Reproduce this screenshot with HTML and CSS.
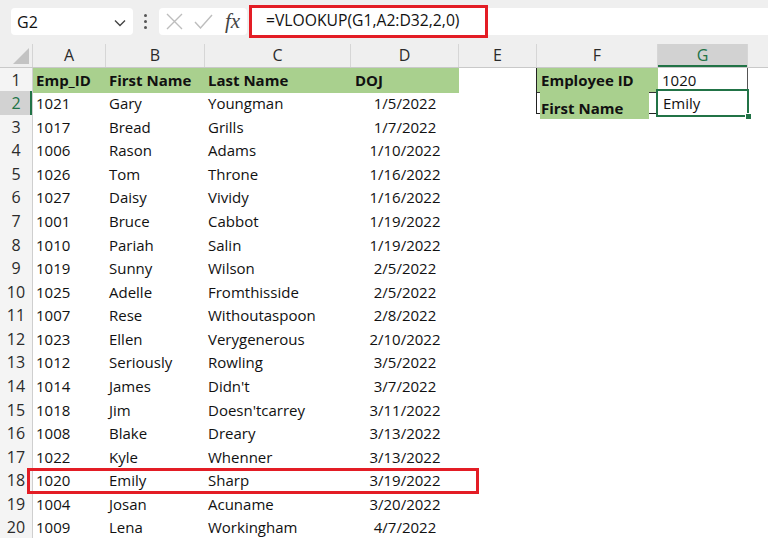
FILE: index.html
```html
<!DOCTYPE html>
<html>
<head>
<meta charset="utf-8">
<link rel="stylesheet" href="styles.css">
</head>
<body>
<div class="toolbar">
  <div class="namebox"><span>G2</span>
    <svg class="chev" width="12" height="8" viewBox="0 0 12 8"><path d="M1 1.5 L6 6.5 L11 1.5" fill="none" stroke="#444" stroke-width="1.4"/></svg>
  </div>
  <div class="dots"><i></i><i></i><i></i></div>
  <div class="fxbox">
    <svg width="17" height="17" viewBox="0 0 17 17"><path d="M1 1 L16 16 M16 1 L1 16" stroke="#bdbdbd" stroke-width="1.4" fill="none"/></svg>
    <svg width="19" height="15" viewBox="0 0 19 15"><path d="M1 8 L6.5 14 L18 1" stroke="#bdbdbd" stroke-width="1.4" fill="none"/></svg>
    <span class="fx">fx</span>
  </div>
  <div class="formula"><div class="hl">=VLOOKUP(G1,A2:D32,2,0)</div></div>
</div>
<div class="sheet">
  <div class="row colhead">
    <div class="corner"><svg width="16" height="16" viewBox="0 0 16 16"><path d="M16 0 L16 16 L0 16 Z" fill="#c3c3c3"/></svg></div>
    <div class="ch">A</div><div class="ch">B</div><div class="ch">C</div><div class="ch">D</div><div class="ch">E</div><div class="ch">F</div><div class="ch sel">G</div><div class="ch last"></div>
  </div>
  <div class="row">
    <div class="rh">1</div>
    <div class="c g b">Emp_ID</div><div class="c g b">First Name</div><div class="c g b">Last Name</div><div class="c g b doj">DOJ</div>
    <div class="c"></div><div class="c g b f1">Employee ID</div><div class="c g1">1020</div><div class="c"></div>
  </div>
  <div class="row">
    <div class="rh sel">2</div>
    <div class="c">1021</div><div class="c">Gary</div><div class="c">Youngman</div><div class="c d">1/5/2022</div>
    <div class="c"></div><div class="c f2"><div class="f2fill">First Name</div></div><div class="c g2">Emily<span class="selbox"><i class="handle"></i></span></div><div class="c"></div>
  </div>
  <div class="row"><div class="rh">3</div><div class="c">1017</div><div class="c">Bread</div><div class="c">Grills</div><div class="c d">1/7/2022</div><div class="c"></div><div class="c"></div><div class="c"></div><div class="c"></div></div>
  <div class="row"><div class="rh">4</div><div class="c">1006</div><div class="c">Rason</div><div class="c">Adams</div><div class="c d">1/10/2022</div><div class="c"></div><div class="c"></div><div class="c"></div><div class="c"></div></div>
  <div class="row"><div class="rh">5</div><div class="c">1026</div><div class="c">Tom</div><div class="c">Throne</div><div class="c d">1/16/2022</div><div class="c"></div><div class="c"></div><div class="c"></div><div class="c"></div></div>
  <div class="row"><div class="rh">6</div><div class="c">1027</div><div class="c">Daisy</div><div class="c">Vividy</div><div class="c d">1/16/2022</div><div class="c"></div><div class="c"></div><div class="c"></div><div class="c"></div></div>
  <div class="row"><div class="rh">7</div><div class="c">1001</div><div class="c">Bruce</div><div class="c">Cabbot</div><div class="c d">1/19/2022</div><div class="c"></div><div class="c"></div><div class="c"></div><div class="c"></div></div>
  <div class="row"><div class="rh">8</div><div class="c">1010</div><div class="c">Pariah</div><div class="c">Salin</div><div class="c d">1/19/2022</div><div class="c"></div><div class="c"></div><div class="c"></div><div class="c"></div></div>
  <div class="row"><div class="rh">9</div><div class="c">1019</div><div class="c">Sunny</div><div class="c">Wilson</div><div class="c d">2/5/2022</div><div class="c"></div><div class="c"></div><div class="c"></div><div class="c"></div></div>
  <div class="row"><div class="rh">10</div><div class="c">1025</div><div class="c">Adelle</div><div class="c">Fromthisside</div><div class="c d">2/5/2022</div><div class="c"></div><div class="c"></div><div class="c"></div><div class="c"></div></div>
  <div class="row"><div class="rh">11</div><div class="c">1007</div><div class="c">Rese</div><div class="c">Withoutaspoon</div><div class="c d">2/8/2022</div><div class="c"></div><div class="c"></div><div class="c"></div><div class="c"></div></div>
  <div class="row"><div class="rh">12</div><div class="c">1023</div><div class="c">Ellen</div><div class="c">Verygenerous</div><div class="c d">2/10/2022</div><div class="c"></div><div class="c"></div><div class="c"></div><div class="c"></div></div>
  <div class="row"><div class="rh">13</div><div class="c">1012</div><div class="c">Seriously</div><div class="c">Rowling</div><div class="c d">3/5/2022</div><div class="c"></div><div class="c"></div><div class="c"></div><div class="c"></div></div>
  <div class="row"><div class="rh">14</div><div class="c">1014</div><div class="c">James</div><div class="c">Didn't</div><div class="c d">3/7/2022</div><div class="c"></div><div class="c"></div><div class="c"></div><div class="c"></div></div>
  <div class="row"><div class="rh">15</div><div class="c">1018</div><div class="c">Jim</div><div class="c">Doesn'tcarrey</div><div class="c d">3/11/2022</div><div class="c"></div><div class="c"></div><div class="c"></div><div class="c"></div></div>
  <div class="row"><div class="rh">16</div><div class="c">1008</div><div class="c">Blake</div><div class="c">Dreary</div><div class="c d">3/13/2022</div><div class="c"></div><div class="c"></div><div class="c"></div><div class="c"></div></div>
  <div class="row"><div class="rh">17</div><div class="c">1022</div><div class="c">Kyle</div><div class="c">Whenner</div><div class="c d">3/13/2022</div><div class="c"></div><div class="c"></div><div class="c"></div><div class="c"></div></div>
  <div class="row mark"><div class="rh">18</div><div class="c">1020</div><div class="c">Emily</div><div class="c">Sharp</div><div class="c d">3/19/2022</div><div class="c"></div><div class="c"></div><div class="c"></div><div class="c"></div></div>
  <div class="row"><div class="rh">19</div><div class="c">1004</div><div class="c">Josan</div><div class="c">Acuname</div><div class="c d">3/20/2022</div><div class="c"></div><div class="c"></div><div class="c"></div><div class="c"></div></div>
  <div class="row"><div class="rh">20</div><div class="c">1009</div><div class="c">Lena</div><div class="c">Workingham</div><div class="c d">4/7/2022</div><div class="c"></div><div class="c"></div><div class="c"></div><div class="c"></div></div>
</div>
</body>
</html>
```
FILE: styles.css
```css
html, body {
  margin: 0;
  padding: 0;
  background: #fff;
  overflow: hidden;
  width: 768px;
  height: 538px;
  font-family: "Open Sans", "Noto Sans", sans-serif;
  color: #111;
}

.toolbar {
  height: 44px;
  box-sizing: border-box;
  background: #efefef;
  display: flex;
  align-items: flex-start;
  padding-top: 8px;
  padding-left: 11px;
}

.namebox {
  width: 122px;
  height: 27px;
  background: #fff;
  border-radius: 4px;
  display: flex;
  align-items: center;
  justify-content: space-between;
  box-sizing: border-box;
  padding: 0 7px 0 6px;
  font-size: 16px;
}
.chev { margin-top: 2px; }

.dots {
  width: 4px;
  margin-left: 11px;
  height: 27px;
  display: flex;
  flex-direction: column;
  justify-content: center;
  gap: 3px;
}
.dots i {
  display: block;
  width: 3px;
  height: 3px;
  border-radius: 50%;
  background: #555;
}

.fxbox {
  margin-left: 11px;
  width: 88px;
  height: 27px;
  background: #fff;
  border-radius: 4px;
  display: flex;
  align-items: center;
  box-sizing: border-box;
  padding-left: 7px;
  gap: 11px;
}
.fx {
  font-family: "Liberation Serif", "DejaVu Serif", serif;
  font-style: italic;
  font-size: 21px;
  color: #444;
  margin-left: 1px;
  line-height: 1;
}

.formula {
  flex: 1;
  margin-left: 2px;
  height: 27px;
  background: #fff;
}
.hl {
  width: 239px;
  height: 33px;
  margin-top: -3px;
  box-sizing: border-box;
  border: 3.5px solid #e31d25;
  padding-left: 14px;
  font-size: 15.7px;
  line-height: 25px;
}

.row {
  display: grid;
  grid-template-columns: 33px 73px 99px 146px 108px 78px 121px 90px 1fr;
  height: 23.58px;
}

.colhead {
  height: 23.5px;
  background: #efefef;
  border-bottom: 1px solid #c9c9c9;
  box-sizing: border-box;
}
.corner {
  display: flex;
  align-items: flex-end;
  justify-content: flex-end;
  padding: 0 3px 3px 0;
  box-sizing: border-box;
  border-right: 1px solid #d4d4d4;
}
.ch {
  text-align: center;
  font-size: 16px;
  line-height: 23px;
  color: #2b2b2b;
  border-right: 1px solid #d6d6d6;
}
.ch.last { border-right: 0; }
.ch.sel {
  background: #d2d2d2;
  color: #217346;
  box-shadow: inset 0 -2px 0 #217346;
}

.rh {
  background: #f4f4f4;
  border-right: 1px solid #cfcfcf;
  text-align: center;
  font-size: 16px;
  line-height: 24px;
  color: #2b2b2b;
}
.rh.sel {
  background: #d2d2d2;
  color: #217346;
  box-shadow: inset -2px 0 0 #217346;
}

.c {
  font-size: 15px;
  line-height: 24px;
  padding-left: 3px;
  white-space: nowrap;
  position: relative;
}
.c.d {
  text-align: center;
  padding-left: 0;
}
.c.doj { padding-left: 4px; }
.c.g { background: #a9d08e; }
.c.b { font-weight: 700; }

.f1 {
  padding-left: 4px;
  border-left: 1px solid #222;
  border-bottom: 1px solid #333;
  box-sizing: border-box;
  margin-left: -1px;
}
.g1 {
  border-right: 1px solid #555;
  padding-left: 4px;
}

.f2 {
  border-left: 1px solid #222;
  border-bottom: 1px solid #222;
  margin-left: -1px;
  height: 23px;
  box-sizing: border-box;
}
.f2fill {
  position: absolute;
  left: 3px;
  top: 0;
  width: 109px;
  height: 28px;
  box-sizing: border-box;
  padding-top: 6px;
  padding-left: 1px;
  line-height: 22px;
  background: #a9d08e;
  font-weight: 700;
  z-index: 2;
}

.g2 { padding-left: 5px; }
.selbox {
  position: absolute;
  left: -2px;
  top: -2px;
  right: -1px;
  bottom: -2px;
  border: 2px solid #217346;
  z-index: 3;
}
.handle {
  position: absolute;
  right: -5px;
  bottom: -5px;
  width: 5px;
  height: 5px;
  background: #217346;
  border: 1px solid #fff;
}

.mark { position: relative; }
.mark::after {
  content: "";
  position: absolute;
  left: 27px;
  top: -0.5px;
  width: 452px;
  height: 26px;
  box-sizing: border-box;
  border: 3.5px solid #e31d25;
}
```
